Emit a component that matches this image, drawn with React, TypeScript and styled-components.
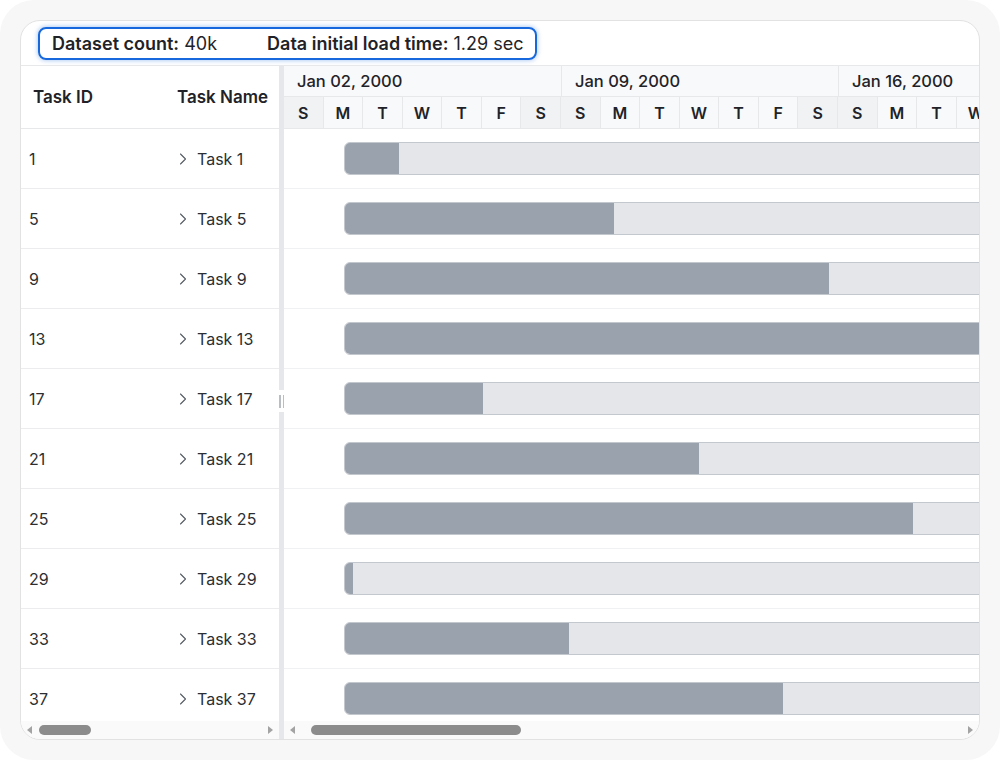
import React from "react";
import styled, { createGlobalStyle } from "styled-components";
import { ChevronRight } from "lucide-react";

interface Task {
  id: number;
  name: string;
  progress: number | "full";
}

const TASKS: Task[] = [
  { id: 1, name: "Task 1", progress: 54 },
  { id: 5, name: "Task 5", progress: 269 },
  { id: 9, name: "Task 9", progress: 484 },
  { id: 13, name: "Task 13", progress: "full" },
  { id: 17, name: "Task 17", progress: 138 },
  { id: 21, name: "Task 21", progress: 354 },
  { id: 25, name: "Task 25", progress: 568 },
  { id: 29, name: "Task 29", progress: 8 },
  { id: 33, name: "Task 33", progress: 224 },
  { id: 37, name: "Task 37", progress: 438 },
];

const WEEKS = ["Jan 02, 2000", "Jan 09, 2000", "Jan 16, 2000"];
const DAYS = ["S", "M", "T", "W", "T", "F", "S"];

const GlobalStyle = createGlobalStyle`
  html, body {
    margin: 0;
    background: #ffffff;
    font-family: Inter, "Noto Sans", sans-serif;
    color: #1f2328;
  }
  * { box-sizing: border-box; }
`;

const ScrollStrip: React.FC<{ thumbStart: number; thumbWidth: number }> = ({
  thumbStart,
  thumbWidth,
}) => (
  <Strip>
    <Arrow $dir="left" />
    <Track>
      <Thumb style={{ marginLeft: thumbStart, width: thumbWidth }} />
    </Track>
    <Arrow $dir="right" />
  </Strip>
);

const App: React.FC = () => {
  return (
    <>
      <GlobalStyle />
      <Frame>
        <Card>
          <Toolbar>
            <StatsBox>
              <Stat>
                <b>Dataset count:</b> 40k
              </Stat>
              <Stat>
                <b>Data initial load time:</b> 1.29 sec
              </Stat>
            </StatsBox>
          </Toolbar>

          <GridArea>
            <LeftPane>
              <LeftHeader>
                <HeaderCell $width={144}>Task ID</HeaderCell>
                <HeaderCell $width={114}>Task Name</HeaderCell>
              </LeftHeader>
              <Rows>
                {TASKS.map((t) => (
                  <LeftRow key={t.id}>
                    <IdCell>{t.id}</IdCell>
                    <NameCell>
                      <ChevronRight size={20} strokeWidth={1.3} color="#555b63" />
                      <span>{t.name}</span>
                    </NameCell>
                  </LeftRow>
                ))}
              </Rows>
              <ScrollStrip thumbStart={1} thumbWidth={52} />
            </LeftPane>

            <Splitter>
              <Grip>
                <i />
                <i />
              </Grip>
            </Splitter>

            <RightPane>
              <Timeline>
                <WeekRow>
                  {WEEKS.map((w) => (
                    <WeekCell key={w}>{w}</WeekCell>
                  ))}
                </WeekRow>
                <DayRow>
                  {WEEKS.map((w) => (
                    <WeekDays key={w}>
                      {DAYS.map((d, i) => (
                        <DayCell key={i} $weekend={i === 0 || i === 6}>
                          {d}
                        </DayCell>
                      ))}
                    </WeekDays>
                  ))}
                </DayRow>
              </Timeline>
              <Rows>
                {TASKS.map((t) => (
                  <ChartRow key={t.id}>
                    <Bar>
                      <Progress
                        style={{
                          width: t.progress === "full" ? "100%" : t.progress,
                        }}
                      />
                    </Bar>
                  </ChartRow>
                ))}
              </Rows>
              <ScrollStrip thumbStart={10} thumbWidth={210} />
            </RightPane>
          </GridArea>
        </Card>
      </Frame>
    </>
  );
};

const Frame = styled.div`
  width: 1000px;
  height: 760px;
  padding: 20px;
  background: #f7f7f7;
  border-radius: 34px;
`;

const Card = styled.div`
  height: 100%;
  display: flex;
  flex-direction: column;
  background: #ffffff;
  border: 1.5px solid #e2e2e2;
  border-radius: 20px;
  overflow: hidden;
`;

const Toolbar = styled.div`
  height: 44px;
  flex-shrink: 0;
  padding: 6px 0 0 17px;
`;

const StatsBox = styled.div`
  display: inline-flex;
  align-items: center;
  gap: 50px;
  height: 33px;
  padding: 0 12px;
  border: 2px solid #1668dc;
  border-radius: 8px;
  box-shadow: 0 0 5px rgba(22, 104, 220, 0.45);
`;

const Stat = styled.span`
  font-size: 18px;
  color: #1f2328;
  white-space: nowrap;

  b {
    font-weight: 600;
  }
`;

const GridArea = styled.div`
  flex: 1;
  min-height: 0;
  display: flex;
  border-top: 1px solid #e7e8ea;
`;

const LeftPane = styled.div`
  width: 258px;
  flex-shrink: 0;
  display: flex;
  flex-direction: column;
  min-height: 0;
`;

const LeftHeader = styled.div`
  height: 63px;
  flex-shrink: 0;
  display: flex;
  align-items: center;
  border-bottom: 1px solid #e7e8ea;
`;

const HeaderCell = styled.div<{ $width: number }>`
  width: ${({ $width }) => $width}px;
  padding-left: 12px;
  font-size: 17px;
  font-weight: 600;
  color: #1f2328;
  white-space: nowrap;
`;

const Rows = styled.div`
  flex: 1;
  min-height: 0;
  overflow: hidden;
`;

const LeftRow = styled.div`
  height: 60px;
  display: flex;
  align-items: center;
  border-bottom: 1px solid #ececee;
  font-size: 16px;
  color: #2b2f33;
`;

const IdCell = styled.div`
  width: 144px;
  padding-left: 8px;
`;

const NameCell = styled.div`
  display: flex;
  align-items: center;
  gap: 4px;
  padding-left: 8px;
  white-space: nowrap;
`;

const Splitter = styled.div`
  position: relative;
  width: 5px;
  flex-shrink: 0;
  background: #e6e7ea;
`;

const Grip = styled.div`
  position: absolute;
  left: -1px;
  top: 324px;
  width: 7px;
  height: 22px;
  display: flex;
  justify-content: center;
  align-items: center;
  gap: 2px;
  background: #ffffff;

  i {
    display: block;
    width: 1.5px;
    height: 13px;
    background: #b9bdc4;
  }
`;

const RightPane = styled.div`
  flex: 1;
  min-width: 0;
  display: flex;
  flex-direction: column;
  min-height: 0;
  overflow: hidden;
`;

const Timeline = styled.div`
  height: 63px;
  flex-shrink: 0;
  display: flex;
  flex-direction: column;
  border-bottom: 1px solid #e7e8ea;
  background: #f8f9fa;
`;

const WeekRow = styled.div`
  height: 31px;
  display: flex;
  border-bottom: 1px solid #e7e8ea;
`;

const WeekCell = styled.div`
  width: 277px;
  flex-shrink: 0;
  display: flex;
  align-items: center;
  padding-left: 13px;
  font-size: 16.5px;
  font-weight: 500;
  color: #1f2328;
  white-space: nowrap;

  & + & {
    border-left: 1px solid #e7e8ea;
  }
`;

const DayRow = styled.div`
  flex: 1;
  display: flex;
`;

const WeekDays = styled.div`
  width: 277px;
  flex-shrink: 0;
  display: flex;
`;

const DayCell = styled.div<{ $weekend: boolean }>`
  flex: 1;
  display: flex;
  align-items: center;
  justify-content: center;
  font-size: 16px;
  font-weight: 600;
  color: #1f2328;
  background: ${({ $weekend }) => ($weekend ? "#f1f2f4" : "#f8f9fa")};
  border-right: 1px solid #e7e8ea;
`;

const ChartRow = styled.div`
  height: 60px;
  padding: 13px 0 0 60px;
  border-bottom: 1px solid #f0f1f2;
`;

const Bar = styled.div`
  width: 700px;
  height: 33px;
  background: #e4e6ea;
  border: 1px solid #c3c7ce;
  border-radius: 6px;
  overflow: hidden;
`;

const Progress = styled.div`
  height: 100%;
  background: #9aa2ad;
`;

const Strip = styled.div`
  height: 18px;
  flex-shrink: 0;
  display: flex;
  align-items: center;
  padding: 0 6px;
  gap: 6px;
  background: #fafafa;
`;

const Arrow = styled.span<{ $dir: "left" | "right" }>`
  width: 0;
  height: 0;
  border-top: 4px solid transparent;
  border-bottom: 4px solid transparent;
  ${({ $dir }) =>
    $dir === "left"
      ? "border-right: 5px solid #a3a3a3;"
      : "border-left: 5px solid #a3a3a3;"}
`;

const Track = styled.div`
  flex: 1;
  display: flex;
  align-items: center;
`;

const Thumb = styled.div`
  height: 10px;
  border-radius: 5px;
  background: #8c8c8c;
`;

export default App;
